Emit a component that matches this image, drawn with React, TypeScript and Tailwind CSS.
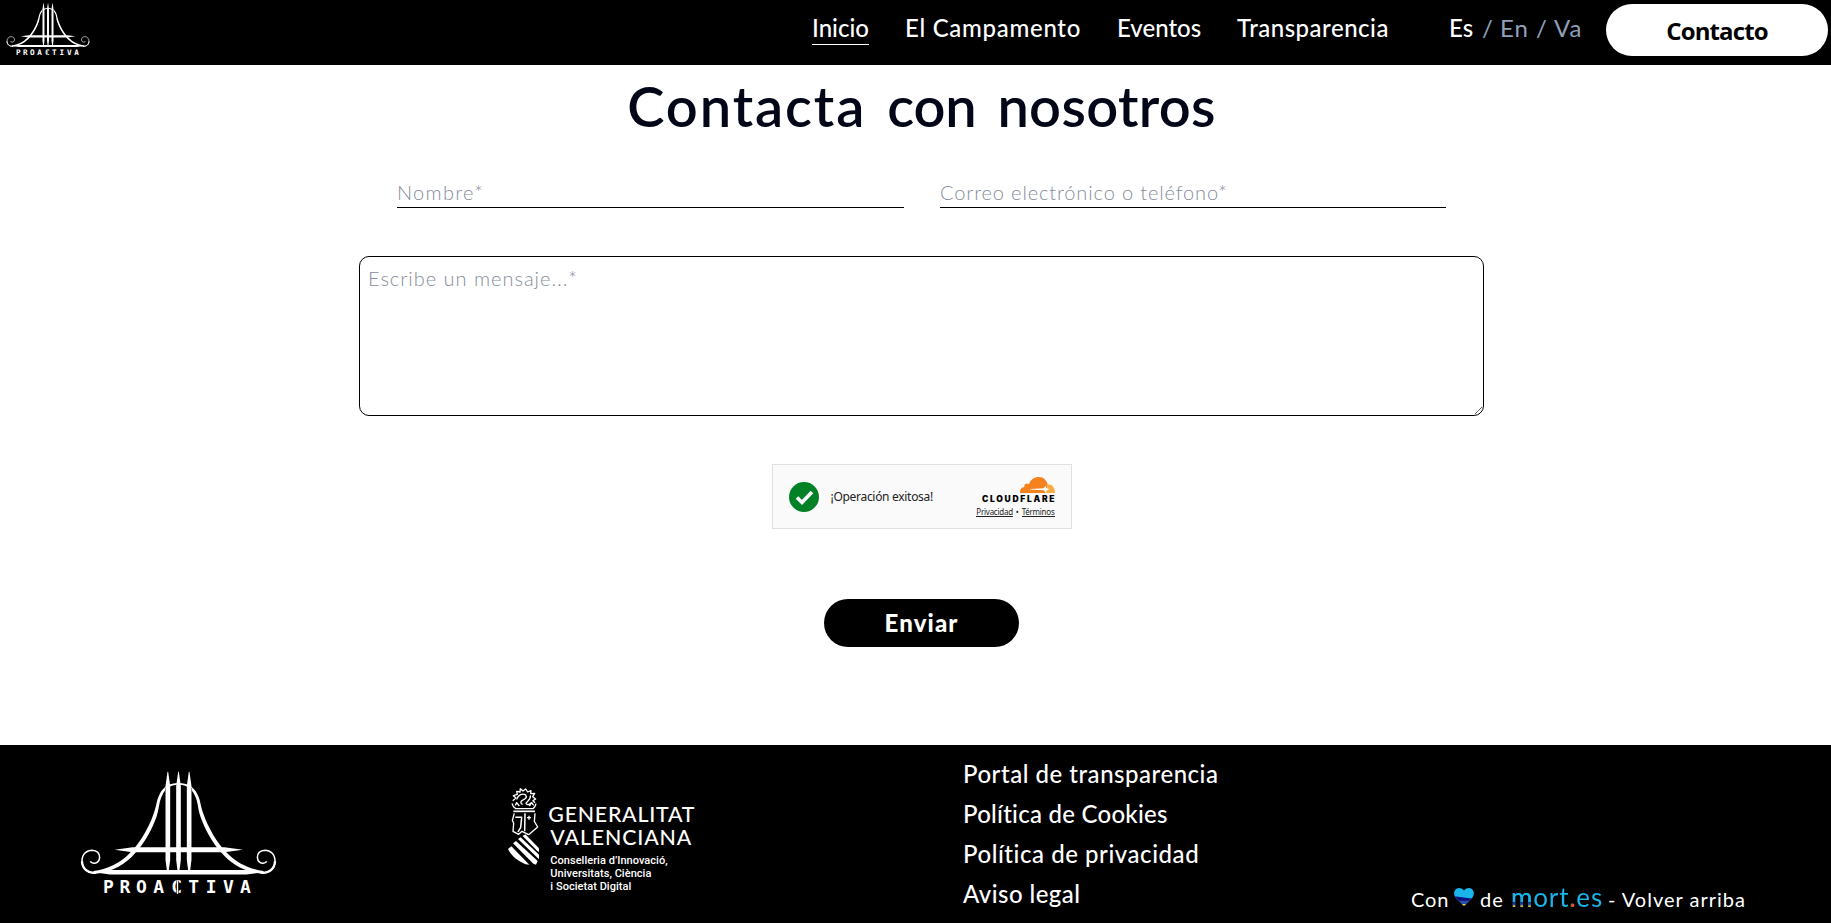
type LogoProps = { className: string };

function ProactivaLogo({ className }: LogoProps) {
  const half = (
    <>
      <path d="M325 131C300 131 280 143 270 163C258 186 262 196 249 229C238 260 212 310 180 341C150 372 112 390 70 395L72 404C130 399 170 370 194 343C226 310 247 268 260 232C270 200 266 190 277 168C286 147 300 137 325 135Z" fill="#fff" />
      <path d="M80 399C52 406 36 386 36 366C36 344 50 333 66 333C82 334 89 344 89 355C88 368 78 373 71 372C65 371 62 369 61 366" fill="none" stroke="#fff" strokeWidth="4.5" />
      <path d="M78 400C54 404 37 388 36 366" fill="none" stroke="#fff" strokeWidth="7" />
    </>
  );
  return (
    <svg viewBox="30 95 592 375" className={className} role="img" aria-label="Proactiva">
      <g>{half}</g>
      <g transform="translate(652 0) scale(-1 1)">{half}</g>
      {[294, 326, 358].map((x) => (
        <g key={x}>
          <path d={`M${x - 8} 145H${x + 8}V360H${x - 8}Z`} fill="#000" />
          <path d={`M${x - 1} 97H${x + 1}L${x + 7} 140V362L${x + 3} 393H${x - 3}L${x - 7} 362V140Z`} fill="#fff" />
        </g>
      ))}
      <path d="M134 331L188 324H464L519 331L464 339H188Z" fill="#fff" />
      <path d="M72 399L110 392H540L580 399L530 406H120Z" fill="#fff" />
      <text
        x="99 149 198 250 304 355 408 460 511"
        y="462"
        fill="#fff"
        fontSize="54"
        fontWeight="700"
        fontFamily="'DejaVu Sans Mono', monospace"
      >
        PROACTIVA
      </text>
      <path d="M323 424V464" stroke="#000" strokeWidth="7" />
      <path d="M323 424V464" stroke="#fff" strokeWidth="4" />
    </svg>
  );
}

function GeneralitatLogo() {
  return (
    <svg viewBox="0 0 660 420" className="h-[140px] w-[220px]" role="img" aria-label="Generalitat Valenciana">
      <g fill="none" stroke="#fff" strokeWidth="4" strokeLinejoin="round">
        <path d="M68 92L78 84L70 77L82 73L80 64L90 66L91 56L99 63L107 57L113 66L123 62L122 71L134 70L128 80L137 87L129 92L135 98" />
        <path d="M80 88C84 74 98 69 107 75C113 83 104 88 97 91C90 95 92 102 98 103M121 76C124 88 112 92 108 100C112 106 120 104 124 98" />
        <path d="M66 100C68 108 72 113 77 116H129C134 112 137 107 138 101M76 106L80 98L88 108M118 108L125 98L131 106" />
        <path d="M70 124H135" strokeWidth="5" />
        <path d="M73 130L67 151L71 160L69 184L86 193L96 184L116 194L143 171L133 154L135 130" />
        <path d="M76 142H95L92 172L84 186M105 130L104 184" strokeWidth="4.5" />
        <path d="M117 137V149M111 143H123" strokeWidth="4" />
      </g>
      <path d="M98 198L106 193L147 235V246L142 243Z" fill="#fff" />
      <path d="M84 207L92 202L147 254V268Z" fill="#fff" />
      <path d="M69 220L78 213L143 273L138 284L130 281Z" fill="#fff" />
      <path d="M54 237L64 229L118 284L107 283C84 273 65 259 54 237Z" fill="#fff" />
      <g fill="#fff" fontFamily="Lato, sans-serif" fontSize="64" fontWeight="500">
        <text x="175" y="157" textLength="438" lengthAdjust="spacing">GENERALITAT</text>
        <text x="181" y="226" textLength="423" lengthAdjust="spacing">VALENCIANA</text>
      </g>
      <g fill="#fff" fontFamily="Roboto, sans-serif" fontSize="33" fontWeight="500">
        <text x="181" y="283" textLength="352">Conselleria d’Innovació,</text>
        <text x="181" y="322" textLength="303">Universitats, Ciència</text>
        <text x="181" y="361" textLength="243">i Societat Digital</text>
      </g>
    </svg>
  );
}

function HeartIcon() {
  return (
    <svg viewBox="0 0 60 54" className="h-[18px] w-5">
      <defs>
        <clipPath id="heart">
          <path d="M30 54L5 29C-4 17 1 1 15 0C22 0 27 3 30 8C33 3 38 0 45 0C59 1 64 17 55 29Z" />
        </clipPath>
      </defs>
      <g clipPath="url(#heart)">
        <path d="M0 0H60V54H0Z" fill="#1ab5ea" />
        <path d="M0 25L60 32V54H0Z" fill="#10107e" />
        <path d="M10 38L60 39V54H10Z" fill="#2a4db0" />
        <path d="M20 48H40V54H20Z" fill="#f5c51b" />
      </g>
    </svg>
  );
}

function CloudIcon() {
  return (
    <svg viewBox="0 0 106 48" className="h-4 w-[35px]">
      <path d="M0 48C-1 38 4 31 13 30C12 21 20 17 27 22C32 7 44 0 57 0C72 0 81 10 84 24C84 32 80 37 76 48Z" fill="#f6821f" />
      <path d="M78 48C83 39 84 31 83 22C96 21 106 30 106 48Z" fill="#fbad41" />
      <path d="M30 36L72 34L77 26L80 34L90 37L80 40L77 47L72 40L30 38Z" fill="#fff" />
    </svg>
  );
}

function Header() {
  return (
    <header className="flex h-[65px] bg-black text-white">
      <ProactivaLogo className="mt-[3px] ml-[6px] h-[53px] w-[84px]" />
      <nav className="ml-[722px] flex gap-9 pt-[9px] text-2xl leading-[37px] font-medium whitespace-nowrap">
        <a className="h-9 w-[57px] border-b border-white">Inicio</a>
        <a className="w-[176px] tracking-[0.7px]">El Campamento</a>
        <a className="w-[84px]">Eventos</a>
        <a className="w-[153px] tracking-[0.5px]">Transparencia</a>
      </nav>
      <div className="ml-[59px] flex w-[157px] pt-[9px] text-2xl leading-[37px] text-slate-400">
        <span className="w-[33px] font-medium text-white">Es</span>
        <span className="w-[18px]">/</span>
        <span className="w-[36px] tracking-[1px]">En</span>
        <span className="w-[18px]">/</span>
        <span className="tracking-[1px]">Va</span>
      </div>
      <a className="mt-1 flex h-[52px] w-[222px] items-center justify-center rounded-full bg-white pt-0.5 font-['Open_Sans',sans-serif] text-2xl font-bold tracking-[-0.9px] text-black">
        Contacto
      </a>
    </header>
  );
}

function Turnstile() {
  return (
    <div className="mt-12 flex h-[65px] w-[300px] items-center border border-[#e0e0e0] bg-[#fafafa] px-4 font-['Noto_Sans',sans-serif] text-[#232323]">
      <svg viewBox="0 0 30 30" className="size-[30px]">
        <circle cx="15" cy="15" r="15" fill="#038127" />
        <path d="M8 15.5L13 20.5L23 10" fill="none" stroke="#fff" strokeWidth="3.6" />
      </svg>
      <span className="ml-3 flex-1 pt-px text-xs tracking-[-0.3px] whitespace-nowrap">¡Operación exitosa!</span>
      <div className="flex flex-col items-end">
        <CloudIcon />
        <span className="mt-[2px] -mr-[1.7px] font-[Inter,sans-serif] text-[8.5px] leading-[9px] font-black tracking-[1.7px] text-black">
          CLOUDFLARE
        </span>
        <div className="mt-[3px] flex gap-[3px] text-[8px] leading-[9px] tracking-[-0.25px]">
          <a className="border-b border-[#232323]">Privacidad</a>
          <span>•</span>
          <a className="border-b border-[#232323]">Términos</a>
        </div>
      </div>
    </div>
  );
}

function ContactForm() {
  return (
    <main className="flex h-[680px] flex-col items-center pl-3">
      <h1 className="flex h-[80px] gap-[21px] pt-px text-[56px] leading-[80px] font-semibold text-[#020617]">
        <span className="tracking-[1.9px]">Contacta</span>
        <span className="tracking-[-0.2px]">con</span>
        <span className="tracking-[0.3px]">nosotros</span>
      </h1>
      <form className="flex w-[1125px] flex-col items-center">
        <div className="mt-[33px] flex gap-9">
          <input
            className="h-[30px] w-[507px] border-b border-black pb-[2px] text-xl font-light tracking-[1.3px] outline-none placeholder:text-[#868d9b]"
            placeholder="Nombre*"
          />
          <input
            className="h-[30px] w-[506px] border-b border-black pb-[2px] text-xl font-light tracking-[0.86px] outline-none placeholder:text-[#868d9b]"
            placeholder="Correo electrónico o teléfono*"
          />
        </div>
        <textarea
          className="mt-12 h-[160px] w-full rounded-[10px] border border-black px-2 pt-[7px] text-xl leading-7 font-light tracking-[0.98px] outline-none placeholder:text-[#868d9b]"
          placeholder="Escribe un mensaje...*"
        />
        <Turnstile />
        <button
          type="button"
          className="mt-[70px] h-12 w-[195px] rounded-full bg-black text-2xl font-black tracking-[1.1px] text-white"
        >
          Enviar
        </button>
      </form>
    </main>
  );
}

function Footer() {
  return (
    <footer className="flex h-[178px] bg-black text-white">
      <ProactivaLogo className="mt-[26px] ml-20 h-[125px] w-[197px]" />
      <div className="mt-[25px] ml-[213px]">
        <GeneralitatLogo />
      </div>
      <ul className="ml-[253px] w-[300px] pt-[9px] text-2xl leading-10 font-medium whitespace-nowrap">
        <li className="tracking-[0.52px]">Portal de transparencia</li>
        <li className="tracking-[0.25px]">Política de Cookies</li>
        <li className="tracking-[0.55px]">Política de privacidad</li>
        <li className="tracking-[0.45px]">Aviso legal</li>
      </ul>
      <div className="mb-[11px] ml-[148px] flex h-[30px] items-baseline self-end text-xl whitespace-nowrap">
        <span className="w-[43px] tracking-[0.9px]">Con</span>
        <span className="w-[26px] -translate-y-px">
          <HeartIcon />
        </span>
        <span className="w-[31px] tracking-[1px]">de</span>
        <span className="w-[97px] bg-[linear-gradient(to_bottom,#1ab5ea_66%,#14148a_66%,#2a4db0_76%,#f5c51b_80%),linear-gradient(#1ab5ea,#1ab5ea)] bg-[length:22px_100%,100%_100%] bg-clip-text bg-no-repeat text-[26px] leading-[30px] tracking-[0.85px] text-transparent">
          mort<span className="text-[#e2511b]">.</span>es
        </span>
        <span className="tracking-[1px]">- Volver arriba</span>
      </div>
    </footer>
  );
}

export default function App() {
  return (
    <div className="min-h-screen w-full bg-white font-[Lato,sans-serif]">
      <Header />
      <ContactForm />
      <Footer />
    </div>
  );
}
